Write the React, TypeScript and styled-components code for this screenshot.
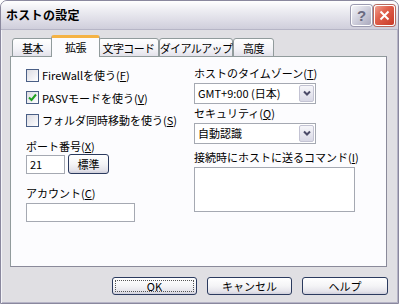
import React from 'react';
import styled, { createGlobalStyle } from 'styled-components';

const GlobalStyle = createGlobalStyle`
  html, body {
    margin: 0;
    padding: 0;
    background: #ffffff;
  }
  body {
    font-family: "Noto Sans CJK JP", "Noto Sans", sans-serif;
    font-size: 11px;
    color: #000;
  }
`;

const Window = styled.div`
  width: 399px;
  height: 304px;
  box-sizing: border-box;
  border: 1px solid #8a889e;
  border-radius: 7px 7px 0 0;
  background: #e0dfe3;
  box-shadow: inset 1px 0 0 #f4f4f8, inset -1px 0 0 #b6b4c6, inset 0 -1px 0 #b6b4c6;
  display: flex;
  flex-direction: column;
  overflow: hidden;
`;

const TitleBar = styled.div`
  height: 28px;
  flex: none;
  display: flex;
  align-items: center;
  padding: 0 3px 0 5px;
  background: linear-gradient(#ffffff 0%, #f1f1f5 25%, #dddce6 70%, #cfcedb 100%);
  border-bottom: 1px solid #b6b5c6;
`;

const Title = styled.div`
  flex: 1;
  font-size: 12px;
  font-weight: bold;
  letter-spacing: 0.3px;
  color: #000;
  margin-top: -2px;
`;

const CaptionButton = styled.div<{ $close?: boolean }>`
  width: 21px;
  height: 21px;
  box-sizing: border-box;
  margin-left: 2px;
  border-radius: 3px;
  border: 1px solid #ffffff;
  display: flex;
  align-items: center;
  justify-content: center;
  background: ${(p) =>
    p.$close
      ? 'linear-gradient(135deg, #f0a090 0%, #e0604c 40%, #c83a28 100%)'
      : 'linear-gradient(135deg, #f4f4f8 0%, #cfcfdc 50%, #a9a8bd 100%)'};
  box-shadow: 0 0 0 1px ${(p) => (p.$close ? '#b66a60' : '#9c9bb0')};
  color: #6a6a80;
  font-family: "Liberation Sans", sans-serif;
  font-size: 15px;
  font-weight: bold;
`;

const Body = styled.div`
  flex: 1;
  display: flex;
  flex-direction: column;
  padding: 5px 10px 0 9px;
`;

const TabStrip = styled.div`
  height: 22px;
  display: flex;
  align-items: flex-end;
  padding-left: 2px;
  position: relative;
  z-index: 1;
`;

const Tab = styled.div<{ $active?: boolean; $w: number }>`
  flex: none;
  width: ${(p) => p.$w}px;
  height: ${(p) => (p.$active ? 22 : 19)}px;
  box-sizing: border-box;
  margin: ${(p) => (p.$active ? '0 -2px' : '0')};
  border: 1px solid #919b9c;
  border-bottom: ${(p) => (p.$active ? 'none' : '1px solid #919b9c')};
  border-radius: 3px 3px 0 0;
  background: ${(p) =>
    p.$active ? '#fcfcfe' : 'linear-gradient(#ffffff 0%, #f3f3f7 60%, #e3e2ea 100%)'};
  border-top: ${(p) => (p.$active ? '3px solid #f5b344' : '1px solid #919b9c')};
  display: flex;
  align-items: center;
  justify-content: center;
  padding-bottom: ${(p) => (p.$active ? 2 : 0)}px;
  font-size: 11px;
  letter-spacing: -0.6px;
  white-space: nowrap;
  position: relative;
  z-index: ${(p) => (p.$active ? 2 : 1)};
`;

const Panel = styled.div`
  width: 377px;
  height: 211px;
  box-sizing: border-box;
  margin-top: -1px;
  border: 1px solid #919b9c;
  border-right-color: #8a8a9a;
  border-bottom-color: #8a8a9a;
  background: #fcfcfe;
  display: grid;
  grid-template-columns: 168px 1fr;
  padding: 7px 0 0 15px;
`;

const Column = styled.div`
  display: flex;
  flex-direction: column;
  align-items: flex-start;
`;

const CheckRow = styled.label`
  height: 22.5px;
  display: flex;
  align-items: center;
  gap: 3px;
  white-space: nowrap;
`;

const CheckBox = styled.span`
  width: 13px;
  height: 13px;
  box-sizing: border-box;
  border: 1px solid #4a5f86;
  background: linear-gradient(135deg, #dcdce2 0%, #f0f0f4 60%, #ffffff 100%);
  display: flex;
  align-items: center;
  justify-content: center;
`;

const Label = styled.div<{ $top: number }>`
  margin-top: ${(p) => p.$top}px;
  line-height: 13px;
  white-space: nowrap;
`;

const TextBox = styled.div<{ $w: number; $h?: number }>`
  width: ${(p) => p.$w}px;
  height: ${(p) => p.$h ?? 19}px;
  box-sizing: border-box;
  border: 1px solid #a5a9b2;
  background: #ffffff;
  padding: 0 3px;
  display: flex;
  align-items: center;
  font-size: 11px;
`;

const FieldRow = styled.div`
  margin-top: 1.5px;
  display: flex;
  align-items: center;
  gap: 3px;
`;

const PushButton = styled.div<{ $w: number; $h: number; $focus?: boolean }>`
  width: ${(p) => p.$w}px;
  height: ${(p) => p.$h}px;
  box-sizing: border-box;
  border: 1px solid #2b3a5e;
  border-radius: 3px;
  background: linear-gradient(#ffffff 0%, #f4f4f6 50%, #e4e3ea 85%, #cfcfdb 100%);
  display: flex;
  align-items: center;
  justify-content: center;
  font-size: 11px;
  position: relative;
  &::after {
    content: '';
    display: ${(p) => (p.$focus ? 'block' : 'none')};
    position: absolute;
    inset: 2px;
    border: 1px dotted #555;
  }
`;

const Select = styled.div`
  width: 122px;
  height: 21px;
  margin-top: 2.5px;
  box-sizing: border-box;
  border: 1px solid #a5a9b2;
  background: #ffffff;
  display: flex;
  align-items: center;
  padding: 0 1px 0 3px;
  font-size: 11px;
`;

const SelectText = styled.span`
  flex: 1;
  white-space: nowrap;
`;

const DropButton = styled.span`
  width: 15px;
  height: 17px;
  box-sizing: border-box;
  border: 1px solid #c3c3d3;
  border-radius: 2px;
  background: linear-gradient(#f6f6fa, #d9d9e6);
  display: flex;
  align-items: center;
  justify-content: center;
`;

const ButtonBar = styled.div`
  display: flex;
  justify-content: flex-end;
  gap: 10px;
  margin-top: 10px;
`;

const Chevron = () => (
  <svg width="8" height="6" viewBox="0 0 8 6">
    <path d="M1 1.5 L4 4.5 L7 1.5" stroke="#4b4b68" strokeWidth="2" fill="none" />
  </svg>
);

const Check = () => (
  <svg width="9" height="9" viewBox="0 0 9 9">
    <path d="M1 4.5 L3.5 7 L8 1.5" stroke="#21a121" strokeWidth="2" fill="none" />
  </svg>
);

const CloseX = () => (
  <svg width="11" height="11" viewBox="0 0 11 11">
    <path d="M1.5 1.5 L9.5 9.5 M9.5 1.5 L1.5 9.5" stroke="#ffffff" strokeWidth="2" />
  </svg>
);

const tabs = [
  { label: '基本', w: 41 },
  { label: '拡張', w: 49, active: true },
  { label: '文字コード', w: 61 },
  { label: 'ダイアルアップ', w: 74 },
  { label: '高度', w: 41 },
];

export default function App() {
  return (
    <>
      <GlobalStyle />
      <Window>
        <TitleBar>
          <Title>ホストの設定</Title>
          <CaptionButton>?</CaptionButton>
          <CaptionButton $close>
            <CloseX />
          </CaptionButton>
        </TitleBar>
        <Body>
          <TabStrip>
            {tabs.map((t) => (
              <Tab key={t.label} $w={t.w} $active={t.active}>
                {t.label}
              </Tab>
            ))}
          </TabStrip>
          <Panel>
            <Column>
              <CheckRow>
                <CheckBox />
                <span>FireWallを使う(<u>F</u>)</span>
              </CheckRow>
              <CheckRow>
                <CheckBox>
                  <Check />
                </CheckBox>
                <span>PASVモードを使う(<u>V</u>)</span>
              </CheckRow>
              <CheckRow>
                <CheckBox />
                <span>フォルダ同時移動を使う(<u>S</u>)</span>
              </CheckRow>
              <Label $top={8}>ポート番号(<u>X</u>)</Label>
              <FieldRow>
                <TextBox $w={39}>21</TextBox>
                <PushButton $w={41} $h={20}>標準</PushButton>
              </FieldRow>
              <Label $top={13}>アカウント(<u>C</u>)</Label>
              <Label $top={2.5}>
                <TextBox $w={109} />
              </Label>
            </Column>
            <Column>
              <Label $top={3}>ホストのタイムゾーン(<u>T</u>)</Label>
              <Select>
                <SelectText>GMT+9:00 (日本)</SelectText>
                <DropButton>
                  <Chevron />
                </DropButton>
              </Select>
              <Label $top={3.5}>セキュリティ(<u>Q</u>)</Label>
              <Select>
                <SelectText>自動認識</SelectText>
                <DropButton>
                  <Chevron />
                </DropButton>
              </Select>
              <Label $top={7}>接続時にホストに送るコマンド(<u>I</u>)</Label>
              <Label $top={3}>
                <TextBox $w={161} $h={45} />
              </Label>
            </Column>
          </Panel>
          <ButtonBar>
            <PushButton $w={85} $h={18} $focus>OK</PushButton>
            <PushButton $w={85} $h={18}>キャンセル</PushButton>
            <PushButton $w={86} $h={18}>ヘルプ</PushButton>
          </ButtonBar>
        </Body>
      </Window>
    </>
  );
}
